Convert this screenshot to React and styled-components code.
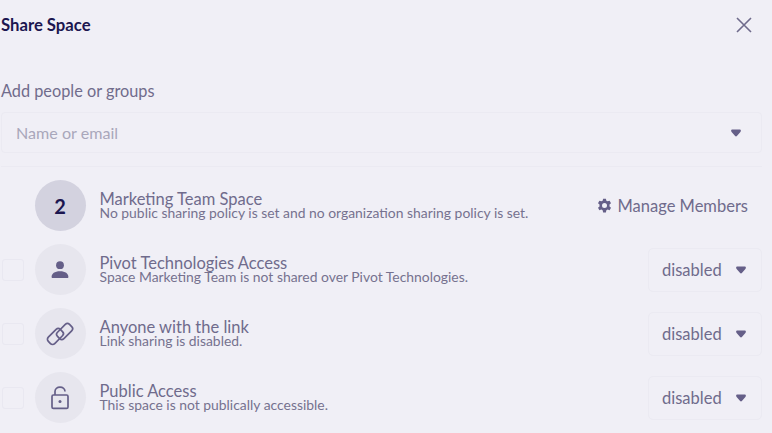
import React from "react";
import styled, { createGlobalStyle } from "styled-components";

const GlobalStyle = createGlobalStyle`
  html, body {
    margin: 0;
    background: #f0eff6;
    font-family: "Lato", "Open Sans", sans-serif;
  }
`;

const Caret = () => (
  <CaretIcon viewBox="0 0 10 8">
    <path d="M1.6.6h6.8C10 .6 10.300 1.800 9.400 2.900L5.900 7c-.5.6-1.300.6-1.800 0L.6 2.900C-.3 1.800 0 .6 1.600.6z" fill="#655f88" />
  </CaretIcon>
);

const PersonIcon = () => (
  <svg width="20" height="20" viewBox="0 0 20 20">
    <circle cx="10" cy="5.2" r="3.900" fill="#655f88" />
    <path d="M1.600 17c0-3.400 3-5.800 8.400-5.800s8.400 2.400 8.400 5.800c0 .7-.4 1.100-1 1.100H2.600c-.6 0-1-.4-1-1.100z" fill="#655f88" />
  </svg>
);

const LinkIcon = () => (
  <svg width="28" height="28" viewBox="0 0 28 28" fill="none" stroke="#655f88" strokeWidth="1.700">
    <g transform="rotate(-45 14 14)">
      <rect x="0.500" y="8" width="17" height="9" rx="3" />
      <rect x="10.500" y="11" width="17" height="9" rx="3" />
    </g>
  </svg>
);

const LockIcon = () => (
  <svg width="20" height="24" viewBox="0 0 20 24" fill="none" stroke="#655f88" strokeWidth="1.700">
    <path d="M5 9V5.600C5 3 7.200 1.200 10 1.200s5 1.800 5 4.400" />
    <rect x="2" y="9" width="16" height="13.400" rx="1.400" />
    <circle cx="10" cy="15.600" r="1.500" fill="#655f88" stroke="none" />
  </svg>
);

const GearIcon = () => (
  <svg width="15" height="15" viewBox="0 0 24 24">
    <path
      fillRule="evenodd"
      fill="#655f88"
      d="M9.800 1h4.400l.8 3.200 2 1.100 3.200-.9 2.200 3.800-2.400 2.300v2.900l2.400 2.200-2.200 3.900-3.200-1-2 1.200-.8 3.300H9.800L9 19.700 7 18.500l-3.200 1-2.200-3.900L4 13.400v-2.900L1.600 8.200l2.200-3.800 3.200.9 2-1.100L9.800 1zM12 8a4 4 0 1 0 0 8 4 4 0 0 0 0-8z"
    />
  </svg>
);

const rows = [
  { title: "Pivot Technologies Access", desc: "Space Marketing Team is not shared over Pivot Technologies.", icon: <PersonIcon /> },
  { title: "Anyone with the link", desc: "Link sharing is disabled.", icon: <LinkIcon /> },
  { title: "Public Access", desc: "This space is not publically accessible.", icon: <LockIcon /> },
];

export default function App() {
  return (
    <Page>
      <GlobalStyle />
      <Header>
        <Title>Share Space</Title>
        <CloseIcon viewBox="0 0 16 16">
          <path d="M1 1l14 14M15 1L1 15" stroke="#6f6b8c" strokeWidth="1.600" fill="none" />
        </CloseIcon>
      </Header>
      <Label>Add people or groups</Label>
      <InputBox>
        <Placeholder>Name or email</Placeholder>
        <Caret />
      </InputBox>
      <Divider />
      <List>
        <Row>
          <CheckSlot />
          <Avatar $strong>2</Avatar>
          <RowText>
            <RowTitle>Marketing Team Space</RowTitle>
            <RowDesc>No public sharing policy is set and no organization sharing policy is set.</RowDesc>
          </RowText>
          <ManageButton>
            <GearIcon />
            Manage Members
          </ManageButton>
        </Row>
        {rows.map((row) => (
          <Row key={row.title}>
            <CheckSlot>
              <Checkbox />
            </CheckSlot>
            <Avatar>{row.icon}</Avatar>
            <RowText>
              <RowTitle>{row.title}</RowTitle>
              <RowDesc>{row.desc}</RowDesc>
            </RowText>
            <SelectBox>
              disabled
              <Caret />
            </SelectBox>
          </Row>
        ))}
      </List>
    </Page>
  );
}

const Page = styled.div`
  width: 772px;
  height: 433px;
  overflow: hidden;
  box-sizing: border-box;
  padding: 0 10px 0 1px;
  background: #f0eff6;
  color: #655f88;
`;

const Header = styled.div`
  display: flex;
  justify-content: space-between;
  align-items: center;
  height: 50px;
  margin-right: -1px;
`;

const Title = styled.h1`
  margin: 0;
  font-size: 16.7px;
  font-weight: 700;
  color: #1c1650;
`;

const CloseIcon = styled.svg`
  width: 16px;
  height: 16px;
  margin-right: 11px;
`;

const Label = styled.div`
  margin-top: 31px;
  height: 20px;
  line-height: 20px;
  font-size: 16.3px;
  color: #706c8c;
`;

const InputBox = styled.div`
  display: flex;
  justify-content: space-between;
  align-items: center;
  box-sizing: border-box;
  height: 41px;
  margin-top: 11px;
  padding: 0 20px 0 14px;
  border: 1px solid #ebeaf2;
  border-radius: 4px;
`;

const Placeholder = styled.span`
  font-size: 16.1px;
  color: #a9a7bb;
`;

const CaretIcon = styled.svg`
  width: 10px;
  height: 8px;
`;

const Divider = styled.div`
  height: 1px;
  margin-top: 13px;
  background: #ebeaf2;
`;

const List = styled.div`
  display: flex;
  flex-direction: column;
  gap: 13px;
  margin-top: 13px;
`;

const Row = styled.div`
  display: flex;
  align-items: center;
  height: 51px;
`;

const CheckSlot = styled.div`
  width: 33.5px;
  flex: none;
  display: flex;
  padding-left: 1px;
  box-sizing: border-box;
`;

const Checkbox = styled.div`
  box-sizing: border-box;
  width: 22px;
  height: 22px;
  border: 1px solid #e9e8f1;
  border-radius: 3px;
`;

const Avatar = styled.div`
  flex: none;
  display: flex;
  align-items: center;
  justify-content: center;
  width: 51px;
  height: 51px;
  border-radius: 50%;
  background: ${(p) => (p.$strong ? "#d3d2df" : "#e7e6ee")};
  color: #1c1650;
  font-size: 20px;
  font-weight: 700;
`;

const RowText = styled.div`
  flex: 1;
  margin-left: 14px;
  display: flex;
  flex-direction: column;
`;

const RowTitle = styled.div`
  font-size: 16.5px;
  line-height: 15px;
  color: #6f6b8c;
`;

const RowDesc = styled.div`
  margin: -1px 0 1px;
  font-size: 13.9px;
  line-height: 13px;
  color: #76728f;
`;

const ManageButton = styled.div`
  display: flex;
  align-items: center;
  gap: 6px;
  margin-right: 14px;
  font-size: 16.5px;
  color: #6f6b8c;
`;

const SelectBox = styled.div`
  display: flex;
  align-items: center;
  justify-content: space-between;
  box-sizing: border-box;
  width: 114px;
  height: 44px;
  padding: 0 15px 0 13px;
  border: 1px solid #ebeaf2;
  border-radius: 5px;
  font-size: 16.5px;
  color: #6f6b8c;
`;
